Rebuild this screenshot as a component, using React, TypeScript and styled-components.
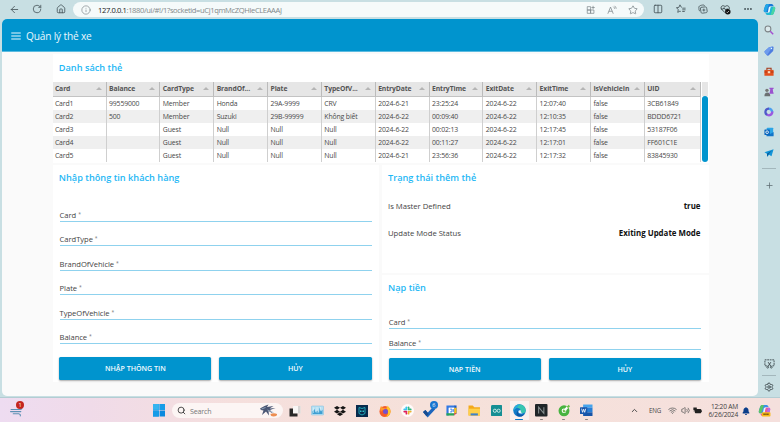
import React from "react";
import styled, { createGlobalStyle } from "styled-components";
import {
  ArrowLeft, RotateCw, House, Info, Star, Columns2, Search, Plus, Settings,
  ChevronUp, Wifi, Volume2, Ellipsis,
} from "lucide-react";
import { FaDropbox, FaBell } from "react-icons/fa";

const GlobalStyle = createGlobalStyle`
  * { box-sizing: border-box; }
  body { margin: 0; overflow: hidden; font-family: "Open Sans", "Noto Sans", sans-serif; }
  svg { display: block; flex: none; }
`;

const BLUE = "#0094ce";
const TITLE = "#1fb8f5";

const Screen = styled.div`
  width: 780px; height: 422px; display: flex; flex-direction: column; overflow: hidden;
`;
const Browser = styled.div`
  height: 398px; display: flex; background: #c8dfe3; border-bottom: 1px solid #b3cdd3;
`;
const BrowserMain = styled.div`
  width: 758px; padding-left: 2px; display: flex; flex-direction: column;
`;
const Toolbar = styled.div`
  height: 19px; display: flex; align-items: flex-start; color: #465459;
`;
const ToolCell = styled.div<{ $w: number }>`
  width: ${(p) => p.$w}px; height: 18px; display: flex; align-items: center; justify-content: center; flex: none;
`;
const AddressBar = styled.div`
  width: 571px; height: 15px; margin: 2px 2px 0 0; border-radius: 8px; background: #f5fafa;
  display: flex; align-items: center; padding: 0 1px 0 8px; color: #7a8488;
`;
const Url = styled.span`
  flex: 1; margin-left: 7px; font-size: 7.6px; line-height: 14px; letter-spacing: -0.39px; color: #83898b;
  white-space: nowrap;
  b { font-weight: 400; color: #17191a; }
`;
const Page = styled.div`
  width: 756px; height: 377px; border-radius: 5px; overflow: hidden; background: #fafafa;
  display: flex; flex-direction: column;
`;
const AppHeader = styled.header`
  height: 33px; background: ${BLUE}; border-bottom: 1px solid #5cbbe0; color: #e9f7fd;
  display: flex; align-items: center; padding: 2px 0 0 8px;
`;
const AppTitle = styled.h1`
  margin: 0 0 0 4px; font-size: 10.2px; font-weight: 400; line-height: 14px; letter-spacing: -0.2px;
`;
const Dashboard = styled.main`
  width: 656px; margin: 2px 0 0 50.5px; display: grid;
  grid-template-columns: 326.5px 326.5px; grid-template-rows: 109px 107.5px 107px; gap: 2.2px 3px;
`;
const Card = styled.section<{ $area: string; $pad?: string }>`
  grid-area: ${(p) => p.$area}; background: #fff; padding: ${(p) => p.$pad ?? "6px 7.5px 0 6.3px"};
  display: flex; flex-direction: column; min-width: 0;
`;
const CardTitle = styled.h2<{ $inset?: number }>`
  margin: 0; padding-left: ${(p) => p.$inset ?? 0}px; font-size: 9.2px; line-height: 14px; font-weight: 600;
  color: ${TITLE}; letter-spacing: 0;
`;
const TableFrame = styled.div`
  display: flex; margin-top: 7.5px; width: 655.5px;
`;
const Grid = styled.div`
  display: grid; grid-template-columns: 54.1px repeat(10, 53.83px) 56.6px; width: 649px;
`;
const HeadCell = styled.div`
  height: 14.5px; background: #e6e6e6; border-right: 1px solid #bbb; border-bottom: 1px solid #c3c3c3;
  display: flex; align-items: center; justify-content: space-between; padding: 0 4px 0 2.4px;
  font-size: 6.8px; font-weight: 700; color: #555; white-space: nowrap; letter-spacing: -0.1px;
`;
const SortMark = styled.i`
  border: 3px solid transparent; border-top: 0; border-bottom: 3px solid #b5b5b5;
`;
const Cell = styled.div<{ $odd: boolean }>`
  height: 13.15px; border-right: 1px solid #cfcfcf; background: ${(p) => (p.$odd ? "#efefef" : "#fff")};
  padding-left: 2.4px; font-size: 6.9px; line-height: 13.6px; color: #484848; white-space: nowrap; letter-spacing: -0.14px;
`;
const ScrollTrack = styled.div`
  flex: 1; padding-top: 13.5px; background: linear-gradient(#e6e6e6 14px, #fff 14px);
`;
const ScrollThumb = styled.div`
  height: 66px; border-radius: 3px; background: ${BLUE};
`;
const Field = styled.label<{ $h: number }>`
  height: ${(p) => p.$h}px; border-bottom: 1px solid #8fd2ee; display: flex; align-items: flex-end;
  font-size: 7.6px; line-height: 11px; color: #444; letter-spacing: -0.05px;
  sup { font-size: 5px; line-height: 8px; margin-left: 2px; align-self: flex-end; padding-bottom: 3px; color: #777; }
`;
const Fields = styled.div<{ $top: number }>`
  margin-top: ${(p) => p.$top}px; margin-left: 0.8px;
`;
const Buttons = styled.div<{ $top: number }>`
  margin-top: ${(p) => p.$top}px; margin-left: 0.5px; display: grid; grid-template-columns: 1fr 1fr; gap: 8px;
`;
const Button = styled.button`
  height: 22.5px; border: 0; padding: 0; border-radius: 1.5px; background: ${BLUE}; color: #f4fbfe;
  font: 600 7.1px/23px "Open Sans", "Noto Sans", sans-serif; letter-spacing: -0.02px;
  box-shadow: 0 1px 2px rgba(0, 0, 0, 0.35);
`;
const Status = styled.div<{ $h: number }>`
  height: ${(p) => p.$h}px; display: flex; justify-content: space-between; align-items: center;
  font-size: 7.7px; color: #444; letter-spacing: -0.02px;
  strong { color: #111; font-size: 7.9px; font-weight: 700; letter-spacing: 0; }
`;
const Sidebar = styled.aside`
  width: 22px; display: flex; flex-direction: column; align-items: center; color: #5d6c71;
`;
const SideCell = styled.div<{ $h: number }>`
  height: ${(p) => p.$h}px; width: 22px; display: flex; align-items: center; justify-content: center; flex: none;
`;
const SideRule = styled.hr`
  width: 14px; height: 1px; border: 0; margin: 0; background: #a3b7bc; flex: none;
`;
const Taskbar = styled.footer`
  height: 24px; display: flex; align-items: center; padding-top: 1px;
  background: linear-gradient(90deg, #eedcf1 0, #f0dbe9 90px, #f5dfdd 230px, #f6e1da 430px, #f5e0dd 780px);
`;
const TaskCell = styled.div<{ $w: number; $active?: boolean; $run?: boolean }>`
  width: ${(p) => p.$w}px; height: 23px; flex: none; display: flex; align-items: center; justify-content: center;
  position: relative;
  background: ${(p) => (p.$active ? "linear-gradient(#faf0ee, #faf0ee) center 2px / 19px 19px no-repeat" : "none")};
  &::after {
    content: ""; display: ${(p) => (p.$run || p.$active ? "block" : "none")};
    position: absolute; bottom: 2px; height: 1.5px; border-radius: 1px;
    width: ${(p) => (p.$active ? 8 : 3)}px; background: ${(p) => (p.$active ? "#0a78c8" : "#8a8382")};
  }
`;
const Badge = styled.span<{ $color: string; $x: number }>`
  position: absolute; left: ${(p) => p.$x}px; top: 2px; width: 8px; height: 8px; border-radius: 50%;
  background: ${(p) => p.$color}; color: #fff; font-size: 5.5px; line-height: 8px; text-align: center;
`;
const SearchBox = styled.div`
  width: 110.5px; height: 15.5px; margin-left: 2px; border-radius: 8px; background: #fcf5f4; flex: none;
  display: flex; align-items: center; padding: 0 5px; color: #333;
  span { flex: 1; margin-left: 4px; font-size: 7.1px; color: #777; letter-spacing: -0.15px; }
`;
const Spacer = styled.div<{ $w: number }>`
  width: ${(p) => p.$w}px; flex: none;
`;
const Lang = styled.div`
  width: 22px; text-align: center; font-size: 6.2px; color: #444; letter-spacing: -0.15px;
`;
const Clock = styled.div`
  width: 32px; font-size: 6.6px; line-height: 8px; color: #3d3d3d; white-space: nowrap; letter-spacing: -0.2px;
  display: flex; flex-direction: column; align-items: flex-end;
`;

type S = { children: React.ReactNode; w?: number; h?: number; vb?: string };
const Svg = ({ children, w = 12, h = w, vb = "0 0 24 24" }: S) => (
  <svg width={w} height={h} viewBox={vb} fill="none">{children}</svg>
);

const MenuIcon = () => (
  <Svg w={12}><path d="M2.500 6h19M2.500 12h19M2.500 18h19" stroke="currentColor" strokeWidth="2.400" /></Svg>
);
const CopilotIcon = ({ pro = false }: { pro?: boolean }) => (
  <Svg w={13}>
    <path d="M8 2h8c2 0 3 2 3.600 4H13L10 17H4c-3 0-3-3-2-6l2-6c.8-2 2-3 4-3Z" fill={pro ? "#3b8fe8" : "#1878d8"} />
    <path d="M16 22H8c-2 0-3-2-3.600-4H11L14 7h6c3 0 3 3 2 6l-2 6c-.8 2-2 3-4 3Z" fill={pro ? "#e85a9d" : "#20b9d4"} />
    <path d="M2 11l2-6c.8-2 2-3 4-3h3L6 17H4c-3 0-3-3-2-6Z" fill={pro ? "#5bc466" : "#21a6e6"} />
    <path d="M19 7h1c3 0 3 3 2 6l-2 6c-.8 2-2 3-4 3h-2Z" fill={pro ? "#b66ce8" : "#4bd4a3"} />
    <path d="M11 7h3l-2 10H9Z" fill="#e8f8ff" />
    {pro && <><rect x="7" y="15" width="16" height="8" rx="1.500" fill="#f7b917" /><path d="M10 19h10" stroke="#6a4a10" strokeWidth="3" strokeDasharray="2.500 1" /></>}
  </Svg>
);
const AppsIcon = () => (
  <Svg w={10}><path d="M3 4h8v8H3zM3 12h8v8H3zM11 12h8v8h-8zM17 2v8M13 6h8" stroke="currentColor" strokeWidth="1.700" /></Svg>
);
const ReadIcon = () => (
  <Svg w={10}><path d="M2 21 8.500 5 15 21M4.500 15h8M15 4q3 2 3 5M18 2q4 3 4 7" stroke="currentColor" strokeWidth="1.800" /></Svg>
);
const FavoritesIcon = () => (
  <Svg w={10}><path d="M14 8l-2-1-2.500-5L7 8l-6 1 4.500 4-1.300 7 5.300-3 2 1M15 10h8M15 14h8M15 18h6" stroke="currentColor" strokeWidth="2" /></Svg>
);
const CollectionsIcon = () => (
  <Svg w={10}><path d="M5 17c-4-1-2-5-3-8 0-4 2-5 6-6 5-1 7-1 8 2M7 8l10-1c3 0 4 1 4 4l1 6c0 3-1 4-4 4l-7 1c-3 0-4-1-4-4L6 12c0-2 0-3 1-4ZM14 11v7M10.500 14.500h7" stroke="currentColor" strokeWidth="2" /></Svg>
);
const HealthIcon = () => (
  <Svg w={11}><path d="M11 19 3 11C0 5 7 1 11 6c4-5 11-1 9 5M2 11h5l2-3 3 5 2-2h4" stroke="#3b474b" strokeWidth="2" /><circle cx="17" cy="17" r="6" fill="#111" /><path d="m14 17 2 2 4-4" stroke="#fff" strokeWidth="1.500" /></Svg>
);
const SearchColorIcon = () => (
  <Svg w={10}><circle cx="9.500" cy="9.500" r="7" stroke="#7d8487" strokeWidth="2.500" fill="#dbe9ec" /><path d="m15 15 7 7" stroke="#a44fd0" strokeWidth="3.500" /></Svg>
);
const TagIcon = () => (
  <Svg w={10}><path d="M12 3 21 1q2 0 2 2l-1 9L11 23q-2 1-4-1l-5-6q-2-2 0-4Z" fill="#4e7de0" /><path d="M12 3 21 1 7 22l-5-6q-2-2 0-4Z" fill="#6d9bed" /><circle cx="18" cy="6" r="1.700" fill="#dff" /></Svg>
);
const ToolboxIcon = () => (
  <Svg w={10}><path d="M7 7V3h10v4" stroke="#a33312" strokeWidth="2.500" /><path d="M1 7h22v14H1Z" fill="#e24f1c" /><path d="M1 12h22" stroke="#a7310f" strokeWidth="2" /><rect x="9" y="10" width="6" height="5" fill="#ffd9b8" /></Svg>
);
const GamesIcon = () => (
  <Svg w={10}><circle cx="7" cy="8" r="4" fill="#777" /><path d="M1 22q0-9 7-9t7 9Z" fill="#6c7072" /><path d="M13 2h10v3h-2l1 8h1v3H13v-3h1l1-8h-2Z" fill="#9b52cf" /></Svg>
);
const M365Icon = () => (
  <Svg w={10}><path d="M11 4q8 0 9 9" stroke="#4b9ff0" strokeWidth="5.500" /><path d="M20 11q0 8-8 9-4 0-6-3" stroke="#9b58e0" strokeWidth="5.500" /><path d="M7 19q-5-4-3-10 2-5 8-5" stroke="#4f59c9" strokeWidth="5.500" /></Svg>
);
const OutlookIcon = () => (
  <Svg w={10}><rect x="7" y="2" width="15" height="18" rx="1" fill="#2ba5e6" /><path d="M6 12l9 5 8-5v10H6Z" fill="#1275c9" /><rect x="1" y="6" width="13" height="13" rx="1" fill="#0b66bd" /><circle cx="7.500" cy="12.500" r="3.200" stroke="#fff" strokeWidth="2" /></Svg>
);
const PlaneIcon = () => (
  <Svg w={10}><path d="M1 10 23 3l-5 17-6-4-4 5-1-7Z" fill="#1294d8" /><path d="m7 14 12-8-8 9-3 6Z" fill="#075c9d" /></Svg>
);
const CaptureIcon = () => (
  <Svg w={11}><path d="M6 17H2V4h20v13h-4" stroke="#3f4c50" strokeWidth="2" strokeDasharray="4 1.500" /><path d="m9 9 6 9M15 9l-6 9" stroke="#3f4c50" strokeWidth="2" /><circle cx="8" cy="20" r="2" stroke="#3f4c50" strokeWidth="1.800" /><circle cx="16" cy="20" r="2" stroke="#3f4c50" strokeWidth="1.800" /></Svg>
);
const WindowsIcon = () => (
  <Svg w={12.5}><path d="M0 0h11.300v11.300H0zM12.700 0H24v11.300H12.700zM0 12.700h11.300V24H0zM12.700 12.700H24V24H12.700z" fill="#0a89df" /><path d="M0 0h11.300v11.300H0z" fill="#35b4f0" /><path d="M12.700 0H24v11.300H12.700zM0 12.700h11.300V24H0z" fill="#159ce8" /></Svg>
);
const WidgetsIcon = () => (
  <Svg w={13}><path d="M2 10h17q3 0 3-3M1 14h19M6 18h10q4 1 3 4" stroke="#5d91b4" strokeWidth="2" strokeLinecap="round" /></Svg>
);
const CrabIcon = () => (
  <Svg w={18} h={13} vb="0 0 36 26"><path d="m0 9 9-5 8-3-3 5 13-2-8 5 12-1-11 4 6 7-9-5 1 9-6-8-8 7 3-9-5-1Z" fill="#4a5674" /><path d="m3 10 8-3m4 5 12 5" stroke="#a7bed2" strokeWidth="1.500" /><path d="M21 20q7-3 13 0 1 4-7 5-6 0-6-5Z" fill="#ed8e52" /></Svg>
);
const TaskViewIcon = () => (
  <Svg w={12}><path d="M8 2h15v15H8Z" fill="#f8f6f5" /><path d="M18 2h5v15h-5Z" fill="#d7d4d3" /><path d="M1 7h7v10h9v6H1Z" fill="#292929" /></Svg>
);
const MonitorIcon = () => (
  <Svg w={13} h={11} vb="0 0 26 22"><rect x="1" y="2" width="24" height="18" rx="1" fill="#b7e0f3" stroke="#79bddd" /><path d="M3 18v-5l4-5 2 7 4-4 3 6 1-12 3 8 3-4v9Z" fill="#3e9fd2" /><path d="M5 5v11M12 4v12M19 4v7" stroke="#e9f8ff" /></Svg>
);
const RobotIcon = () => (
  <Svg w={12}><rect width="24" height="24" fill="#082b4d" /><path d="M6 5v12q6 6 12 0V5q-6 4-12 0Z" stroke="#1fa4b8" strokeWidth="2" /><path d="M8 11h3v3H8zM13 11h3v3h-3z" fill="#33c2cc" /></Svg>
);
const FirefoxIcon = () => (
  <Svg w={12}><circle cx="12" cy="13" r="11" fill="#f55b2b" /><path d="M17 1q7 7 6 14-2 8-11 9 7-4 6-11-1-6-4-7 4-1 3-5Z" fill="#ffc62a" /><path d="M2 7 4 2l4 4q4-1 7 2l-6 2q-4 0-5 4Z" fill="#ff972d" /><circle cx="13" cy="13" r="5" fill="#7351cf" /></Svg>
);
const SlackIcon = () => (
  <Svg w={13}><circle cx="12" cy="12" r="12" fill="#fffafa" /><g strokeWidth="3.200" strokeLinecap="round"><path d="M10 6v4" stroke="#36c5f0" /><path d="M6 10h2" stroke="#36c5f0" /><path d="M14 10h4M14 6v1" stroke="#2eb67d" /><path d="M14 14v4M17 14h1" stroke="#ecb22e" /><path d="M6 14h4M10 17v1" stroke="#e01e5a" /></g></Svg>
);
const TodoIcon = () => (
  <Svg w={14}><path d="m2 12 6 7L19 7" stroke="#1c66bd" strokeWidth="5.500" /><path d="m2 12 6 7" stroke="#174c91" strokeWidth="5.500" /></Svg>
);
const CalendarIcon = () => (
  <Svg w={11}><path d="M1 1h18v5H6v17H1Z" fill="#3179e4" /><path d="M18 1h5v18h-5Z" fill="#175bc6" /><path d="M6 6h12v12H6Z" fill="#fff" /><path d="M1 18h17v5H1Z" fill="#27a65a" /><path d="M18 6h5v12h-5Z" fill="#f9bd16" /><path d="m18 18h5l-5 5Z" fill="#e94235" /><path d="M9 9h4v6H9m7-6v6" stroke="#3179e4" strokeWidth="2" /></Svg>
);
const FolderIcon = () => (
  <Svg w={12.5}><path d="M1 3h8l3 3h11v16H1Z" fill="#f3a91a" /><path d="M1 9h22v13H1Z" fill="#ffd04a" /><path d="M5 18h14v4H5Z" fill="#3f83cb" /></Svg>
);
const ArduinoIcon = () => (
  <Svg w={11.5}><rect width="24" height="24" rx="3" fill="#168f94" /><circle cx="8" cy="12" r="3.300" stroke="#d8f4ef" strokeWidth="1.800" /><circle cx="16" cy="12" r="3.300" stroke="#d8f4ef" strokeWidth="1.800" /></Svg>
);
const EdgeIcon = () => (
  <Svg w={13}><circle cx="12" cy="12" r="11.500" fill="#117bc9" /><path d="M1 10Q4 0 13 1q9 1 10.500 10 0 6-6 6-5-1-3-5-2-6-8-5-4 1-5.500 5Z" fill="#38c6b0" /><path d="M1 10Q5-1 13 1L6 8q-3 1-5 6Z" fill="#28a9dd" /><path d="M10 11q-3 8 6 9 4 0 6-3-5 9-14 5-4-5 2-11Z" fill="#0b56a6" /><path d="M15 12q-2 4 3 5-6 2-8-2-1-5 5-3Z" fill="#f3fafd" /></Svg>
);
const NIcon = () => (
  <Svg w={12.5}><rect width="24" height="24" rx="2" fill="#202528" /><path d="M7 18V6l10 12V6" stroke="#899293" strokeWidth="2" /></Svg>
);
const CocCocIcon = () => (
  <Svg w={12.5}><circle cx="11.500" cy="13" r="7.500" stroke="#47b340" strokeWidth="6" fill="#fff" /><circle cx="12" cy="13" r="3" fill="#73be52" /><path d="m13 12 9-10" stroke="#fff" strokeWidth="4" /><path d="m17 5 4-4 2 4-4 3Z" fill="#69bd45" /></Svg>
);
const WordIcon = () => (
  <Svg w={12.5}><path d="M6 1h18v6H6Z" fill="#45a4ed" /><path d="M6 7h18v9H6Z" fill="#267ed6" /><path d="M6 16h18v7H6Z" fill="#1554a8" /><rect y="6" width="14" height="13" rx="1" fill="#1757ad" /><path d="m3 9 2 7 2-6 2 6 2-7" stroke="#fff" strokeWidth="1.500" /></Svg>
);
const BatteryIcon = () => (
  <Svg w={9}><rect x="5" y="8" width="17" height="11" rx="2" fill="#222" /><path d="M22 11h2v5h-2zM1 4h9v7H1z" fill="#222" /><path d="m3 15 5-8" stroke="#222" strokeWidth="2" /></Svg>
);

const columns = ["Card", "Balance", "CardType", "BrandOf...", "Plate", "TypeOfV...", "EntryDate", "EntryTime", "ExitDate", "ExitTime", "IsVehicleIn", "UID"];
const rows = [
  ["Card1", "99559000", "Member", "Honda", "29A-9999", "CRV", "2024-6-21", "23:25:24", "2024-6-22", "12:07:40", "false", "3CB61849"],
  ["Card2", "500", "Member", "Suzuki", "29B-99999", "Không biết", "2024-6-22", "00:09:40", "2024-6-22", "12:10:35", "false", "BDDD6721"],
  ["Card3", "", "Guest", "Null", "Null", "Null", "2024-6-22", "00:02:13", "2024-6-22", "12:17:45", "false", "53187F06"],
  ["Card4", "", "Guest", "Null", "Null", "Null", "2024-6-22", "00:11:27", "2024-6-22", "12:17:01", "false", "FF601C1E"],
  ["Card5", "", "Guest", "Null", "Null", "Null", "2024-6-21", "23:56:36", "2024-6-22", "12:17:32", "false", "83845930"],
];
const customerFields = ["Card", "CardType", "BrandOfVehicle", "Plate", "TypeOfVehicle", "Balance"];

const FieldList = ({ names, top, step }: { names: string[]; top: number; step: number }) => (
  <Fields $top={top}>
    {names.map((n) => (
      <Field key={n} $h={step}>{n}<sup>*</sup></Field>
    ))}
  </Fields>
);

export default function App() {
  return (
    <Screen>
      <GlobalStyle />
      <Browser>
        <BrowserMain>
          <Toolbar>
            <ToolCell $w={24}><ArrowLeft size={11} strokeWidth={1.8} /></ToolCell>
            <ToolCell $w={22}><RotateCw size={10} strokeWidth={1.9} /></ToolCell>
            <ToolCell $w={25}><House size={10} strokeWidth={2} /></ToolCell>
            <AddressBar>
              <Info size={10} strokeWidth={1.6} />
              <Url><b>127.0.0.1</b>:1880/ui/#!/1?socketid=uCj1qmMcZQHleCLEAAAJ</Url>
              <ToolCell $w={20}><AppsIcon /></ToolCell>
              <ToolCell $w={21}><ReadIcon /></ToolCell>
              <ToolCell $w={21}><Star size={10} strokeWidth={1.8} /></ToolCell>
            </AddressBar>
            <ToolCell $w={24}><Columns2 size={10} strokeWidth={2} /></ToolCell>
            <ToolCell $w={22}><FavoritesIcon /></ToolCell>
            <ToolCell $w={22}><CollectionsIcon /></ToolCell>
            <ToolCell $w={23}><HealthIcon /></ToolCell>
            <ToolCell $w={21}><Ellipsis size={10} strokeWidth={2.6} /></ToolCell>
          </Toolbar>
          <Page>
            <AppHeader>
              <MenuIcon />
              <AppTitle>Quản lý thẻ xe</AppTitle>
            </AppHeader>
            <Dashboard>
              <Card $area="1 / 1 / 2 / 3" $pad="6.5px 0 0 0">
                <CardTitle $inset={6.3}>Danh sách thẻ</CardTitle>
                <TableFrame>
                  <Grid>
                    {columns.map((c) => <HeadCell key={c}>{c}<SortMark /></HeadCell>)}
                    {rows.map((r, i) => r.map((v, j) => <Cell key={`${i}-${j}`} $odd={i % 2 === 1}>{v}</Cell>))}
                  </Grid>
                  <ScrollTrack><ScrollThumb /></ScrollTrack>
                </TableFrame>
              </Card>
              <Card $area="2 / 1 / 4 / 2">
                <CardTitle>Nhập thông tin khách hàng</CardTitle>
                <FieldList names={customerFields} top={12} step={24.5} />
                <Buttons $top={13}>
                  <Button>NHẬP THÔNG TIN</Button>
                  <Button>HỦY</Button>
                </Buttons>
              </Card>
              <Card $area="2 / 2 / 3 / 3" $pad="6px 8px 0 6px">
                <CardTitle>Trạng thái thêm thẻ</CardTitle>
                <Status $h={41}><span>Is Master Defined</span><strong>true</strong></Status>
                <Status $h={14}><span>Update Mode Status</span><strong>Exiting Update Mode</strong></Status>
              </Card>
              <Card $area="3 / 2 / 4 / 3" $pad="6px 7.5px 0 6px">
                <CardTitle>Nạp tiền</CardTitle>
                <FieldList names={["Card", "Balance"]} top={13} step={21} />
                <Buttons $top={8}>
                  <Button>NẠP TIỀN</Button>
                  <Button>HỦY</Button>
                </Buttons>
              </Card>
            </Dashboard>
          </Page>
        </BrowserMain>
        <Sidebar>
          <SideCell $h={19}><CopilotIcon /></SideCell>
          <SideCell $h={22}><SearchColorIcon /></SideCell>
          <SideCell $h={20}><TagIcon /></SideCell>
          <SideCell $h={21}><ToolboxIcon /></SideCell>
          <SideCell $h={20}><GamesIcon /></SideCell>
          <SideCell $h={20}><M365Icon /></SideCell>
          <SideCell $h={20}><OutlookIcon /></SideCell>
          <SideCell $h={21}><PlaneIcon /></SideCell>
          <SideCell $h={5} />
          <SideRule />
          <SideCell $h={32}><Plus size={9} strokeWidth={2} /></SideCell>
          <SideCell $h={153} />
          <SideCell $h={19}><CaptureIcon /></SideCell>
          <SideCell $h={2} />
          <SideRule />
          <SideCell $h={21}><Settings size={10} strokeWidth={2.2} color="#3f4c50" /></SideCell>
        </Sidebar>
      </Browser>
      <Taskbar>
        <Spacer $w={5} />
        <TaskCell $w={22}><WidgetsIcon /><Badge $color="#c4261d" $x={11}>1</Badge></TaskCell>
        <Spacer $w={120.5} />
        <TaskCell $w={22.5}><WindowsIcon /></TaskCell>
        <SearchBox><Search size={9} strokeWidth={2.3} /><span>Search</span><CrabIcon /></SearchBox>
        <Spacer $w={1.5} />
        <TaskCell $w={22.4}><TaskViewIcon /></TaskCell>
        <TaskCell $w={22.4}><MonitorIcon /></TaskCell>
        <TaskCell $w={22.4}><FaDropbox size={12} color="#151515" /></TaskCell>
        <TaskCell $w={22.4}><RobotIcon /></TaskCell>
        <TaskCell $w={22.4}><FirefoxIcon /></TaskCell>
        <TaskCell $w={22.4}><SlackIcon /></TaskCell>
        <TaskCell $w={22.4}><TodoIcon /><Badge $color="#1774cf" $x={11.5}>6</Badge></TaskCell>
        <TaskCell $w={22.4}><CalendarIcon /></TaskCell>
        <TaskCell $w={22.4}><FolderIcon /></TaskCell>
        <TaskCell $w={22.4}><ArduinoIcon /></TaskCell>
        <TaskCell $w={22.4} $active><EdgeIcon /></TaskCell>
        <TaskCell $w={22.4} $run><NIcon /></TaskCell>
        <TaskCell $w={22.4} $run><CocCocIcon /></TaskCell>
        <TaskCell $w={22.4} $run><WordIcon /></TaskCell>
        <Spacer $w={27.5} />
        <TaskCell $w={19}><ChevronUp size={9} strokeWidth={2.5} color="#444" /></TaskCell>
        <Lang>ENG</Lang>
        <TaskCell $w={14}><Wifi size={9} strokeWidth={2.3} color="#666" /></TaskCell>
        <TaskCell $w={11}><Volume2 size={9} strokeWidth={2} color="#555" /></TaskCell>
        <TaskCell $w={13}><BatteryIcon /></TaskCell>
        <Spacer $w={2} />
        <Clock><span>12:20 AM</span><span>6/26/2024</span></Clock>
        <TaskCell $w={17}><FaBell size={8} color="#0b3d8a" /></TaskCell>
        <TaskCell $w={19}><CopilotIcon pro /></TaskCell>
      </Taskbar>
    </Screen>
  );
}
